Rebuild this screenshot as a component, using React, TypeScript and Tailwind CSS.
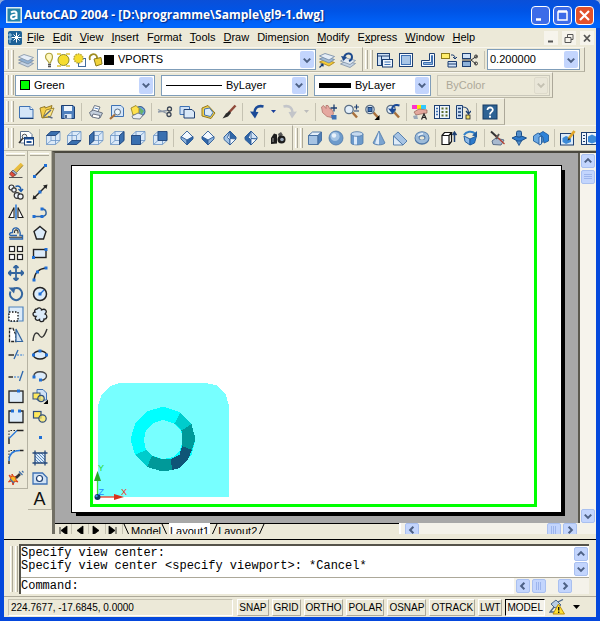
import React from 'react';

const D = '#1d3f72';
const M = '#3f72b4';
const L = '#cfe1f6';
const K = '#222222';

const CUBE_FACES = {
  top: '1.5,5.5 6,1.5 15,1.5 10.5,5.5',
  bottom: '1.5,14.5 6,10.5 15,10.5 10.5,14.5',
  left: '1.5,5.5 6,1.5 6,10.5 1.5,14.5',
  right: '10.5,5.5 15,1.5 15,10.5 10.5,14.5',
  front: '1.5,5.5 10.5,5.5 10.5,14.5 1.5,14.5',
  back: '6,1.5 15,1.5 15,10.5 6,10.5',
};

const cube = (face: keyof typeof CUBE_FACES) => (
  <g stroke="#6a93c4" strokeWidth="0.8" strokeLinejoin="round">
    <path d="M1.5 5.5L6 1.5H15V10.5L10.5 14.5H1.5Z" fill="#dbe9f8" />
    <path d="M6 1.5V10.5H15M6 10.5L1.5 14.5M1.5 5.5H10.5V14.5M10.5 5.5L15 1.5" fill="none" />
    <polygon points={CUBE_FACES[face]} fill="#3a70b0" stroke={D} />
  </g>
);

const gem = (a: string, b: string, c: string, turned?: boolean) => (
  <g stroke="#2d5c98" strokeWidth="0.9" strokeLinejoin="round">
    <path d="M8 1L14 7L8 15L2 7Z" fill={a} />
    {turned ? (
      <>
        <path d="M8 1L2 7V9.500L8 15V10L5.500 7.500Z" fill={b} />
        <path d="M8 1V8.500L14 9V7Z" fill={c} />
        <path d="M8 15L14 9L8 8.500Z" fill={a} />
      </>
    ) : (
      <>
        <path d="M2 6.500L8 10V15L2 9Z" fill={b} />
        <path d="M14 6.500L8 10V15L14 9Z" fill={c} />
      </>
    )}
  </g>
);

const magnifier = (
  <>
    <path d="M9.500 8.500L14 13.500" stroke="#a8703c" strokeWidth="2.500" />
    <circle cx="6" cy="5.500" r="4.200" fill="#e4f0fb" stroke="#5b6f86" strokeWidth="1.300" />
  </>
);

const ICONS: Record<string, React.ReactNode> = {
  layers: (
    <g stroke="#7d8fa6" strokeWidth="0.8">
      <path d="M0.500 11L6 8.500L15.500 11.500L10 15Z" fill="#c3d2e2" />
      <path d="M0.500 8L6 5.500L15.500 8.500L10 12Z" fill="#8fb0d2" />
      <path d="M0.500 5L6 2.500L15.500 5.500L10 9Z" fill="#e6eef7" />
    </g>
  ),
  layerCurrent: (
    <g strokeWidth="0.8">
      <path d="M0.500 10L6 7.500L15.500 10.500L10 14Z" fill="#f3cb36" stroke="#a8801a" />
      <path d="M0.500 7L6 4.500L15.500 7.500L10 11Z" fill="#9fb9d4" stroke="#6e87a3" />
      <path d="M0.500 4L6 1.500L15.500 4.500L10 8Z" fill="#e6eef7" stroke="#6e87a3" />
      <path d="M0.500 15.500L4 12M4 12H1.500M4 12V14.500" stroke="#10366e" strokeWidth="1.200" />
    </g>
  ),
  layerPrev: (
    <g>
      <path d="M0.500 12L6 9L15.500 11.500L10 15.500Z" fill="#c3d2e2" stroke="#7d8fa6" strokeWidth="0.8" />
      <path d="M0.500 9L6 6L15.500 8.500L10 12.500Z" fill="#e2eaf3" stroke="#7d8fa6" strokeWidth="0.8" />
      <path d="M4 6C5 0.500 12 0 12 5C12 7 10.500 8.500 9 9" fill="none" stroke="#1d4a8c" strokeWidth="2" />
      <path d="M1 4L7 5L3.500 9Z" fill="#1d4a8c" />
    </g>
  ),
  vpDialog: (
    <g stroke={D}>
      <rect x="0.500" y="1.500" width="12" height="12" fill={L} />
      <path d="M0.500 4H12.500M4.500 4V13.500" />
      <rect x="5.500" y="7.500" width="10" height="7.500" fill="#eef5fc" />
      <path d="M7.500 10H13.500M7.500 12.500H13.500" stroke={M} />
    </g>
  ),
  vpSingle: (
    <g>
      <rect x="1.500" y="1.500" width="13" height="13" fill="#f4f9fe" stroke={D} />
      <rect x="3.500" y="3.500" width="9" height="9" fill="#a9c6e6" stroke={M} />
    </g>
  ),
  vpPoly: (
    <g>
      <path d="M9.500 1.500H14.500V14.500H1.500V8.500H9.500Z" fill="#f4f9fe" stroke={D} />
      <path d="M11.500 3.500H12.500V12.500H3.500V10.500H11.500Z" fill="#8fb3da" stroke={M} />
    </g>
  ),
  vpObject: (
    <g>
      <rect x="0.500" y="1.500" width="8" height="5" fill="#ffee6b" stroke="#8b7a19" />
      <path d="M10 3C13 2.500 14 4 14 6.500M12 5L14 7L16 5" fill="none" stroke={D} />
      <path d="M7 9.500H15.500V15H7ZM7 12H15.500" fill={L} stroke={D} />
    </g>
  ),
  vpClip: (
    <g>
      <rect x="0.500" y="1.500" width="8" height="5" fill={L} stroke={D} />
      <rect x="0.500" y="9.500" width="8" height="5" fill="#8fb3da" stroke={D} />
      <path d="M0 8H9L15 4M9 8L14 12" stroke="#333" fill="none" />
      <circle cx="14" cy="4.500" r="1.500" fill="none" stroke="#333" />
      <circle cx="14" cy="11.500" r="1.500" fill="none" stroke="#333" />
    </g>
  ),
  newFile: (
    <g>
      <path d="M1.500 2.500H12L15 5.500V14H1.500Z" fill="#d5e6f8" stroke={M} />
      <path d="M12 2.500V5.500H15" fill="#fff" stroke={M} />
      <path d="M2 14.500H15.500" stroke={D} />
    </g>
  ),
  open: (
    <g>
      <path d="M1 4L6 2.500V4L13 1.500L10 13L3 14Z" fill="#f5cf4c" stroke="#8c7220" strokeWidth="0.9" />
      <path d="M4 13.500L7 6L15 4L11.500 12.500Z" fill="#ffe989" stroke="#8c7220" strokeWidth="0.8" />
      <path d="M5 12.500L12 6M9 12.500L13.500 14" stroke="#5b6b86" strokeWidth="1.500" />
    </g>
  ),
  save: (
    <g>
      <path d="M1.500 1.500H13L14.500 3V14.500H1.500Z" fill="#4f80bd" stroke={D} />
      <rect x="4" y="2" width="8" height="5" fill="#eef5fc" />
      <rect x="4.500" y="10" width="7" height="4.500" fill="#dce8f5" />
      <path d="M6 11V14" stroke={D} strokeWidth="1.500" />
    </g>
  ),
  print: (
    <g stroke="#5e6878" strokeWidth="0.9">
      <path d="M4 7L6.500 1.500L12 3L10 8Z" fill="#fff" />
      <path d="M1.500 8.500L5 6L14.500 9L12 14L3 12Z" fill="#c4cfdd" />
      <path d="M5 10L12 11.500L11 14.500L4 13Z" fill="#fff" />
      <path d="M6.500 4L10.500 5" stroke={M} />
    </g>
  ),
  preview: (
    <g>
      <path d="M2.500 1.500H12L14.500 4V12.500H2.500Z" fill="#d5e6f8" stroke={M} />
      <path d="M6 10.500L1 15" stroke="#a8703c" strokeWidth="2.200" />
      <circle cx="8.500" cy="8" r="3" fill="#eef6fd" stroke="#5b6f86" />
    </g>
  ),
  publish: (
    <g>
      <circle cx="10" cy="7.500" r="5" fill="#6da2dc" stroke={D} strokeWidth="0.8" />
      <path d="M9 3L14 7L11 11Z" fill="#66b36a" />
      <path d="M1 4L6 1.500L9 4.500V10L3 11Z" fill="#ffe14d" stroke="#8b7a19" strokeWidth="0.8" />
      <path d="M2 12L8 9L13 11L10 15L3 14.500Z" fill="#e9eef4" stroke="#5e6878" strokeWidth="0.8" />
    </g>
  ),
  cut: (
    <g fill="none" stroke="#3c4655">
      <path d="M1 5.500L10 9.500M1 8L10 6.500" stroke="#8b97a6" strokeWidth="1.300" />
      <circle cx="12.500" cy="5" r="2" strokeWidth="1.300" />
      <circle cx="12" cy="10.500" r="2" strokeWidth="1.300" />
    </g>
  ),
  copyClip: (
    <g>
      <path d="M1 2.500H10.500V10.500H1Z" fill={L} stroke={M} />
      <path d="M5 5.500H13L15.500 8V14H5Z" fill="#d9e8f8" stroke={D} />
    </g>
  ),
  paste: (
    <g>
      <path d="M2 4L8 1.500L15 9L11 14.500L2 12Z" fill="#f2d04e" stroke="#94791c" />
      <path d="M4.500 5L9.500 4L13 8.500L10.500 12.500L4.500 11Z" fill="#dcebf9" stroke={M} />
    </g>
  ),
  match: (
    <g>
      <path d="M14.500 1.500L8 8.500" stroke="#8f4a3a" strokeWidth="2.500" />
      <path d="M8.500 7L10 9L7 12.500L1.500 14.500L5 9.500Z" fill="#2b2b2b" />
    </g>
  ),
  undo: (
    <g>
      <path d="M14.500 2.500C8 1 5 4.500 5.500 10" fill="none" stroke="#1b4a97" strokeWidth="2.600" />
      <path d="M1 7.500L6 14.500L9.500 8Z" fill="#1b4a97" />
    </g>
  ),
  redo: (
    <g>
      <path d="M1.500 2.500C8 1 11 4.500 10.500 10" fill="none" stroke="#c3c5c9" strokeWidth="2.600" />
      <path d="M15 7.500L10 14.500L6.500 8Z" fill="#c3c5c9" />
    </g>
  ),
  pan: (
    <g>
      <path d="M0.500 3L2.500 1.500L5 4.500L5 1.500L7 1.500L9 5L10.500 5L12.500 9L11 13.500L6 12.500L1.500 8.500Z" fill="#e5a8a0" stroke="#a8675f" strokeWidth="0.700" />
      <path d="M10 11H15.500V15.500H11Z" fill={M} />
      <path d="M13 0.500V7.500M9.500 4H16.500" stroke={D} strokeWidth="1.300" />
    </g>
  ),
  zoomRt: (
    <g>
      {magnifier}
      <path d="M11 3H16M13.500 0.500V5.500M11 7H16" stroke={D} strokeWidth="1.200" />
    </g>
  ),
  zoomWin: (
    <g>
      {magnifier}
      <rect x="4" y="3.500" width="4" height="4" fill={M} stroke={D} />
      <path d="M15.500 11V16H10.500Z" fill="#000" />
    </g>
  ),
  zoomPrev: (
    <g>
      {magnifier}
      <path d="M14.500 1.500C10 0 7 2 7 5.500" fill="none" stroke="#1b4a97" strokeWidth="2" />
      <path d="M3 4.500L7.500 10L11 5Z" fill="#1b4a97" />
    </g>
  ),
  props: (
    <g>
      <rect x="0" y="1" width="5" height="4" fill="#ff32c8" />
      <rect x="5" y="1" width="4" height="4" fill="#ffe600" />
      <rect x="9" y="1" width="5" height="4" fill="#30c8ff" />
      <path d="M2 8L7 5L15 6V9L9 10L4 11Z" fill="#e3a79c" stroke="#8f5f55" strokeWidth="0.700" />
      <path d="M1 12L5 11L6 15H2Z" fill="#9aa8b8" />
      <path d="M9.500 15.500L12 10L14.500 15.500M10.500 13.500H13.500" fill="none" stroke={K} strokeWidth="1.200" />
    </g>
  ),
  designCenter: (
    <g>
      <rect x="0.500" y="1.500" width="15" height="13" fill="#eef5fc" stroke={D} />
      <path d="M5.500 1.500V14.500" stroke={D} />
      <path d="M2 4.500H4M2 7.500H4M2 10.500H4" stroke={M} strokeWidth="1.500" />
      <path d="M7.500 4.500H9.500M11.500 4.500H13.500M7.500 8H9.500M11.500 8H13.500M7.500 11.500H9.500M11.500 11.500H13.500" stroke="#5b6c2d" strokeWidth="2" />
    </g>
  ),
  toolPalette: (
    <g>
      <path d="M1.500 1.500H7.500V14.500H1.500Z" fill={L} stroke={D} />
      <path d="M3 4.500H6M3 8H6M3 11.500H6" stroke={D} strokeWidth="1.500" />
      <path d="M8 3C12 3 13.500 5 13.500 9M11 7L13.500 10L16 7" fill="none" stroke={D} strokeWidth="1.200" />
      <rect x="11" y="11" width="4" height="4" fill="#f0dc60" stroke={K} strokeWidth="0.800" />
    </g>
  ),
  help: (
    <g>
      <rect x="1" y="1" width="14" height="14" fill="#2d6294" stroke="#163a63" />
      <path d="M5.500 6C5.500 2.500 11 2.800 10.800 6C10.700 8 8 7.800 8 10.500" fill="none" stroke="#fff" strokeWidth="1.800" />
      <rect x="7" y="11.700" width="2" height="2" fill="#fff" />
    </g>
  ),
  namedViews: (
    <g>
      <path d="M2.500 1.500H11L14 4.500V13H2.500Z" fill="#fff" stroke="#60748e" />
      <path d="M1 13L5 8" stroke="#333" strokeWidth="1.500" />
      <circle cx="6.500" cy="6.500" r="2.300" fill="#e6f0fa" stroke="#555" />
      <rect x="6.500" y="7.500" width="9" height="7.500" fill="#fff" stroke={D} />
      <path d="M6.500 8.500H15.500M8.500 12H13.500" stroke="#1c4e95" strokeWidth="1.800" />
    </g>
  ),
  viewTop: cube('top'),
  viewBottom: cube('bottom'),
  viewLeft: cube('left'),
  viewRight: cube('right'),
  viewFront: cube('front'),
  viewBack: cube('back'),
  isoSW: gem('#f2f8fe', '#8fb3da', '#2f66a8'),
  isoSE: gem('#f2f8fe', '#2f66a8', '#8fb3da'),
  isoNE: gem('#f2f8fe', '#a6c5e6', '#2f66a8', true),
  isoNW: gem('#f2f8fe', '#2f66a8', '#d2e3f5', true),
  camera: (
    <g fill="#1c1c1c">
      <path d="M1 14V8L4 3.500L7 4.500V13.500Z" />
      <path d="M8 4L11 2L13 5L9 7Z" fill="#555" />
      <circle cx="11.500" cy="9.500" r="4" />
      <circle cx="12" cy="9.500" r="1.800" fill="#9aa8b8" />
      <path d="M3 8V12" stroke="#9a9a9a" />
    </g>
  ),
  box: (
    <g stroke="#426c9e" strokeWidth="0.900" strokeLinejoin="round">
      <path d="M1.500 5.500L5.500 2H14.500L11 5.500Z" fill="#e4effa" />
      <path d="M1.500 5.500H11V14.500H1.500Z" fill="#a6c3e3" />
      <path d="M11 5.500L14.500 2V10.500L11 14.500Z" fill="#4f7fb8" />
    </g>
  ),
  sphere: (
    <g>
      <circle cx="8" cy="8" r="7" fill="#6c9acb" stroke="#4c77a8" strokeWidth="0.800" />
      <circle cx="7" cy="6.500" r="4.600" fill="#a5c4e4" />
      <circle cx="6" cy="5.500" r="2.200" fill="#e9f2fb" />
    </g>
  ),
  cylinder: (
    <g stroke="#4c77a8" strokeWidth="0.800">
      <path d="M2 4V13C2 15.500 14 15.500 14 13V4Z" fill="#6c9acb" />
      <path d="M5 5V14.500H8V5Z" fill="#dceafa" stroke="none" />
      <ellipse cx="8" cy="4" rx="6" ry="2.300" fill="#c6daef" />
    </g>
  ),
  cone: (
    <g>
      <path d="M8 1L14 13C12 15.500 4 15.500 2 13Z" fill="#7ba4d0" stroke="#4c77a8" strokeWidth="0.800" />
      <path d="M8 2L4 13.500L8 14.500Z" fill="#dfebf8" />
    </g>
  ),
  wedge: (
    <g stroke="#4c77a8" strokeWidth="0.900" strokeLinejoin="round">
      <path d="M1.500 6L6 2L15 11L11 15Z" fill="#a6c3e3" />
      <path d="M1.500 6L11 15H1.500Z" fill="#dfebf8" />
    </g>
  ),
  torus: (
    <g>
      <ellipse cx="8" cy="8" rx="5" ry="4.200" fill="none" stroke="#4f78a8" strokeWidth="5" />
      <ellipse cx="8" cy="7.700" rx="5" ry="4" fill="none" stroke="#9dbbd9" strokeWidth="3.200" />
      <path d="M4 5.500Q6 3.500 9 3.700" fill="none" stroke="#e9f2fb" strokeWidth="1.500" />
    </g>
  ),
  extrude: (
    <g fill="none" stroke="#161616" strokeWidth="1.200">
      <path d="M1 5.500H8V14.500H1ZM1 5.500L3.500 2.500H10.500L8 5.500M8 14.500L10.500 11.500V2.500" fill="#fff" />
      <path d="M13.500 12V3M11.500 5L13.500 2L15.500 5" stroke={D} strokeWidth="1.500" />
    </g>
  ),
  revolve: (
    <g>
      <path d="M2 6L8 9V15L3 11.500Z" fill="#8db9e8" stroke="#215d9f" />
      <path d="M8 9L14.500 6L12.500 13L8 15Z" fill="#2d7bcc" stroke="#215d9f" />
      <path d="M2 5C4 1.500 10 0.500 13 3.500" fill="none" stroke="#3280c8" strokeWidth="2" />
      <path d="M15 1V7L10 5.500Z" fill="#215d9f" />
    </g>
  ),
  slice: (
    <g>
      <path d="M2 11L6 8L14 10L11 15L3 14.500Z" fill="#a8b9cf" stroke="#586c88" />
      <path d="M1 1.500L7 7" stroke="#333" strokeWidth="2" />
      <path d="M6 6L14.500 14" stroke="#b23b2c" strokeWidth="1.200" />
      <path d="M9 4L6 9" stroke="#555" strokeWidth="1.800" />
    </g>
  ),
  section: (
    <g>
      <path d="M1 8L8 5L15.500 8L8 12Z" fill="#2d7bcc" stroke="#174c89" />
      <rect x="5.500" y="1" width="5" height="6" rx="1.500" fill="#5590ca" stroke="#174c89" />
      <path d="M5.500 11L8 15.500L10.500 11Z" fill="#5590ca" stroke="#174c89" strokeWidth="0.800" />
    </g>
  ),
  interfere: (
    <g stroke="#215d9f" strokeWidth="0.900">
      <path d="M0.500 6L5 3L10 5V12L5 13.500L0.500 11Z" fill="#6ba8e4" />
      <path d="M6 4L10 1.500L15.500 5V11L11 13L10 7Z" fill="#2d82d8" />
      <path d="M6 7V15L8.500 14V6Z" fill="#cfe5fa" />
    </g>
  ),
  soldraw: (
    <g>
      <rect x="0.500" y="3.500" width="13" height="11.500" fill="#dcebf9" stroke={D} />
      <path d="M2.500 8L6 6L11 8V12L6 14L2.500 12Z" fill="#3b8ad8" />
      <path d="M14.500 1L8.500 9" stroke="#e0a52a" strokeWidth="2.800" />
      <path d="M9 7.500L7.500 10.500L10 9.500Z" fill="#222" />
    </g>
  ),
  solview: (
    <g>
      <rect x="0.500" y="2.500" width="15" height="12" fill="#eef5fc" stroke={D} />
      <path d="M5.500 2.500V14.500M2 5.500H4M2 8.500H4M2 11.500H4" stroke={D} />
      <path d="M7 6.500L11 4.500L15 6.500V12L11 13.500L7 12Z" fill="#3b8ad8" />
    </g>
  ),
  erase: (
    <g>
      <path d="M1 14.500H14.500" stroke="#555" />
      <path d="M14 1L7 8" stroke="#e9bd3d" strokeWidth="3.600" />
      <path d="M15 2.500L8.500 9.500" stroke="#7a6420" strokeWidth="0.800" />
      <path d="M5 7L9 10.500L7.500 12L3.500 8.500Z" fill="#9fb9d4" stroke="#445" strokeWidth="0.700" />
      <path d="M3.500 8.500L7.500 12L4.500 14L1.500 11Z" fill="#e3503f" stroke="#6b2a22" strokeWidth="0.700" />
    </g>
  ),
  copy: (
    <g fill="#edf3f9" stroke="#333" strokeWidth="1.200">
      <circle cx="3.500" cy="3.500" r="2.500" />
      <circle cx="6" cy="6" r="2.200" />
      <circle cx="9" cy="11.500" r="2.800" />
      <circle cx="12.500" cy="12.500" r="2.600" />
      <path d="M7.500 2.500C11 1 13 3 13 6.500M10.500 5L13 7.500L15 5" fill="none" stroke="#1c5cae" strokeWidth="1.400" />
    </g>
  ),
  mirror: (
    <g>
      <path d="M8 0.500V15.500" stroke="#2676d8" strokeWidth="1.500" />
      <path d="M6 3.500V13.500H1Z" fill="#fff" stroke="#222" strokeWidth="1.100" />
      <path d="M10 3.500V13.500H15Z" fill="#fff" stroke="#222" strokeWidth="1.100" />
    </g>
  ),
  offset: (
    <g fill="none">
      <path d="M1.500 14H14.500V10.500H12C13.500 2 4 0 4.500 7.500C1 7.500 0.500 10.500 3.500 10.500H9" stroke="#2c66ae" strokeWidth="1.400" />
      <path d="M1 12.300H14M6.500 8C6 3.500 10.500 4 10 8.500" stroke="#333" strokeWidth="1.100" />
    </g>
  ),
  array: (
    <g fill="#fff" stroke="#222" strokeWidth="1.200">
      <rect x="1.500" y="1.500" width="5" height="5" />
      <rect x="9.500" y="1.500" width="5" height="5" />
      <rect x="1.500" y="9.500" width="5" height="5" />
      <rect x="9.500" y="9.500" width="5" height="5" />
    </g>
  ),
  move: (
    <path d="M8 0.500V15.500M0.500 8H15.500M5.500 3L8 0.500L10.500 3M5.500 13L8 15.500L10.500 13M3 5.500L0.500 8L3 10.500M13 5.500L15.500 8L13 10.500" fill="none" stroke="#33659f" strokeWidth="1.800" />
  ),
  rotate: (
    <g>
      <path d="M6 2.500C13 0 16.500 8 12 12.500C7.500 16.500 0 12 2.500 5.500" fill="none" stroke="#33659f" strokeWidth="2" />
      <path d="M0.500 1.500H7.500L6 7.500Z" fill="#33659f" />
    </g>
  ),
  scale: (
    <g>
      <path d="M1 1H15V15H1Z" fill="#dcebf9" stroke="#4f83bd" strokeWidth="1.200" />
      <rect x="1" y="6" width="9" height="9" fill="#fff" stroke="#111" strokeWidth="1.300" strokeDasharray="1.500 1.500" />
    </g>
  ),
  stretch: (
    <g>
      <path d="M1.500 14.500V1.500H5L8 8V14.500Z" fill="#fff" stroke="#222" strokeDasharray="3 1" strokeWidth="1.300" />
      <path d="M8 2L14.500 14.500H8Z" fill="#d2e3f5" stroke="#33659f" strokeWidth="1.200" />
    </g>
  ),
  trim: (
    <g>
      <path d="M0.500 8H6" stroke="#222" strokeWidth="1.400" />
      <path d="M9 8H16" stroke="#2676d8" strokeWidth="1.200" strokeDasharray="2 1.200" />
      <path d="M6 12L10 3" stroke="#2c66ae" strokeWidth="1.300" />
    </g>
  ),
  extend: (
    <g>
      <path d="M0.500 9H5" stroke="#222" strokeWidth="1.400" />
      <path d="M6 9H12" stroke="#2676d8" strokeWidth="1.200" strokeDasharray="2 1.200" />
      <path d="M11.500 13L15 3" stroke="#2c66ae" strokeWidth="1.300" />
    </g>
  ),
  breakPt: (
    <g>
      <rect x="1" y="3" width="14" height="11.500" fill="#dcebf9" stroke="#222" strokeWidth="1.300" />
      <rect x="9" y="1.500" width="3" height="3" fill="#1f6fd6" />
    </g>
  ),
  breakGap: (
    <g>
      <path d="M4 3H1V14.500H15V3H12" fill="#dcebf9" stroke="#222" strokeWidth="1.300" />
      <rect x="3" y="1.500" width="3" height="3" fill="#1f6fd6" />
      <rect x="10" y="1.500" width="3" height="3" fill="#1f6fd6" />
    </g>
  ),
  chamfer: (
    <g fill="none">
      <path d="M1 15V9M9 1.500H15.500" stroke="#222" strokeWidth="1.400" />
      <path d="M1 9V1.500H9" stroke="#222" strokeDasharray="1.500 1.500" />
      <path d="M1 9.500L9 1.500" stroke="#2676d8" strokeWidth="1.300" />
    </g>
  ),
  fillet: (
    <g fill="none">
      <path d="M1 15V12M12 1.500H15.500" stroke="#222" strokeWidth="1.400" />
      <path d="M1 9V1.500H9" stroke="#222" strokeDasharray="1.500 1.500" />
      <path d="M1 12C1 5 5 1.500 12 1.500" stroke="#2676d8" strokeWidth="1.500" />
    </g>
  ),
  explode: (
    <g>
      <path d="M1 5L4 7L4 4L6 7L9 6L7.500 9L10 12L6.500 11L5 15L4 11L0.500 12L3 9Z" fill="#f5b921" stroke="#d93a1b" />
      <path d="M8 8L12 4" stroke="#333" strokeWidth="2.500" />
      <path d="M11 1.500L14.500 5M14 1L15.500 2.500M2 9L6 13" stroke="#3f6ea8" strokeWidth="1.200" />
    </g>
  ),
  line: (
    <g>
      <path d="M2.500 13.500L13.500 2.500" stroke="#222" strokeWidth="1.400" />
      <rect x="1" y="12" width="3" height="3" fill="#1f6fd6" />
      <rect x="12" y="1" width="3" height="3" fill="#1f6fd6" />
    </g>
  ),
  xline: (
    <g>
      <path d="M2.500 13.500L13.500 2.500" fill="none" stroke="#222" strokeWidth="1.400" />
      <path d="M0.500 15.500L1.500 11L5 14.500ZM15.500 0.500L14.500 5L11 1.500Z" fill="#222" />
      <rect x="6.500" y="6.500" width="3" height="3" fill="#1f6fd6" />
    </g>
  ),
  pline: (
    <g>
      <path d="M2 12.500H10C16 12.500 15 5 10 5" fill="none" stroke="#33659f" strokeWidth="1.500" />
      <rect x="0.500" y="11" width="3" height="3" fill="#1f6fd6" />
      <rect x="8.500" y="11" width="3" height="3" fill="#1f6fd6" />
      <rect x="8.500" y="3.500" width="3" height="3" fill="#1f6fd6" />
    </g>
  ),
  polygon: <path d="M8 1.500L14 6.500L11.500 14H4.500L2 6.500Z" fill="#dcebf9" stroke="#222" strokeWidth="1.400" />,
  rectangle: (
    <g>
      <rect x="1.500" y="4.500" width="12.500" height="8" fill="#dcebf9" stroke="#222" strokeWidth="1.400" />
      <rect x="0" y="11" width="3" height="3" fill="#1f6fd6" />
      <rect x="12.500" y="3" width="3" height="3" fill="#1f6fd6" />
    </g>
  ),
  arc: (
    <g>
      <path d="M2 14C2.500 7 7 2.500 14 2" fill="none" stroke="#222" strokeWidth="1.400" />
      <rect x="0.500" y="12.500" width="3" height="3" fill="#1f6fd6" />
      <rect x="4" y="4.500" width="3" height="3" fill="#1f6fd6" />
      <rect x="12.500" y="0.500" width="3" height="3" fill="#1f6fd6" />
    </g>
  ),
  circle: (
    <g>
      <circle cx="8" cy="8" r="6.500" fill="#dcebf9" stroke="#222" strokeWidth="1.500" />
      <path d="M8 8L12 4" stroke="#1f6fd6" strokeWidth="1.300" />
      <rect x="6.500" y="6.500" width="3" height="3" fill="#1f6fd6" />
    </g>
  ),
  cloud: (
    <path d="M5 2C7 0 9.500 1 9.500 3C13 1 16 4 13 7C16 8.500 15 12.500 12 12C12 15.500 7.500 15.500 7.500 12.500C5 14.500 2 12 4 9.500C0.500 9.500 0 5.500 3 5C2 4 3 2 5 2Z" fill="#dcebf9" stroke="#222" strokeWidth="1.300" />
  ),
  spline: <path d="M1 14C2 4 5.500 5 7.500 8.500C10 12.500 12.500 9 15 2" fill="none" stroke="#333" strokeWidth="1.400" />,
  ellipse: (
    <g>
      <ellipse cx="8" cy="8" rx="6.500" ry="4" fill="#dcebf9" stroke="#222" strokeWidth="1.400" />
      <rect x="0" y="6.500" width="3" height="3" fill="#1f6fd6" />
      <rect x="13" y="6.500" width="3" height="3" fill="#1f6fd6" />
      <rect x="6.500" y="2.500" width="3" height="3" fill="#1f6fd6" />
    </g>
  ),
  ellipseArc: (
    <g>
      <path d="M2 8.500C1 2 15 2.500 14.500 8C14.500 11 11 12.500 8.500 12" fill="#dcebf9" stroke="#444" strokeWidth="1.400" />
      <rect x="0.500" y="7.500" width="3" height="3" fill="#1f6fd6" />
      <rect x="7" y="10.500" width="3" height="3" fill="#1f6fd6" />
    </g>
  ),
  insert: (
    <g>
      <path d="M5 1.500H11L14.500 5V12H5Z" fill="#cfe1f6" stroke={M} />
      <rect x="1" y="5" width="7" height="6" fill="#ffe95c" stroke="#33507a" />
      <circle cx="9" cy="10.500" r="3.200" fill="#ffe95c" fillOpacity="0.700" stroke="#33507a" strokeWidth="1.200" />
      <path d="M16 11.500V16H11.500Z" fill="#000" />
    </g>
  ),
  block: (
    <g>
      <rect x="1.500" y="2.500" width="7.500" height="6.500" fill="#ffe95c" stroke="#33507a" strokeWidth="1.200" />
      <circle cx="10.500" cy="9.500" r="3.700" fill="#ffe95c" fillOpacity="0.700" stroke="#33507a" strokeWidth="1.200" />
    </g>
  ),
  point: <rect x="7" y="7" width="3" height="3" fill="#1f6fd6" />,
  hatch: (
    <g>
      <rect x="3" y="3" width="10" height="10" fill="#dcebf9" />
      <path d="M3 9L7 13M3 6L10 13M3 3L13 13M6 3L13 10M9 3L13 7" stroke="#5e8dc2" />
      <path d="M3 0.500V15.500M13 0.500V15.500M0.500 3H15.500M0.500 13H15.500" stroke="#24487a" strokeWidth="1.300" />
    </g>
  ),
  region: (
    <g>
      <path d="M1 3H10.500L15 7.500V14H1Z" fill="#d2e3f5" stroke={M} strokeWidth="1.300" />
      <circle cx="7.500" cy="8.500" r="3" fill="#fff" stroke={D} strokeWidth="1.200" />
    </g>
  ),
};

const Icon: React.FC<{name: string; className?: string}> = ({name, className = 'size-4'}) => (
  <svg viewBox="0 0 16 16" className={`${className} shrink-0`} aria-hidden="true">
    {ICONS[name]}
  </svg>
);

// '|' is a divider, 'v' a small flyout arrow, everything else an icon name
const STANDARD =
  'newFile open save | print preview publish | cut copyClip paste match | undo v redo v | pan zoomRt zoomWin zoomPrev | props designCenter toolPalette | help';
const VIEWS =
  'namedViews | viewTop viewBottom viewLeft viewRight viewFront viewBack | isoSW isoSE isoNE isoNW | camera';
const SOLIDS =
  'box sphere cylinder cone wedge torus | extrude revolve | slice section interfere | soldraw solview';
const VIEWPORTS = 'vpDialog vpSingle vpPoly vpObject vpClip |';
const MODIFY =
  'erase copy mirror offset array move rotate scale stretch trim extend breakPt breakGap chamfer fillet explode';
const DRAW =
  'line xline pline polygon rectangle arc circle cloud spline ellipse ellipseArc insert block point hatch region';

const Grip = () => (
  <span className="flex w-[11px] shrink-0 gap-0.5 self-stretch py-0.5 pl-0.5">
    <span className="w-[3px] border-r border-l border-r-[#aca899] border-l-white" />
    <span className="w-[3px] border-r border-l border-r-[#aca899] border-l-white" />
  </span>
);

const Tools: React.FC<{items: string}> = ({items}) => (
  <div className="flex flex-1 items-center">
    {items.split(' ').map((item, i) => {
      if (item === '|') {
        return (
          <span key={i} className="flex h-[18px] w-1.5 shrink-0 justify-center">
            <span className="w-px bg-[#c5c2b2]" />
          </span>
        );
      }
      if (item === 'v') {
        return (
          <button key={i} type="button" aria-label="More" className="flex w-3 shrink-0 justify-center">
            <svg viewBox="0 0 5 3" className="w-[5px]">
              <path d="M0 0H5L2.500 3Z" fill={items.split(' ')[i - 1] === 'undo' ? '#1a3f9a' : '#bcbcbc'} />
            </svg>
          </button>
        );
      }
      return (
        <button key={i} type="button" aria-label={item} className="flex flex-1 justify-center">
          <Icon name={item} />
        </button>
      );
    })}
  </div>
);

const Bar: React.FC<{className: string; children: React.ReactNode}> = ({className, children}) => (
  <div
    className={`flex items-center border-t border-r border-b border-t-[#f8f6ee] border-r-[#aca899] border-b-[#b9b6a5] ${className}`}>
    <Grip />
    {children}
  </div>
);

const Palette: React.FC<{items: string; text?: boolean; className: string}> = ({items, text, className}) => (
  <div className={`flex w-6 shrink-0 flex-col border-r border-b border-r-[#b5b2a2] border-b-[#b5b2a2] px-0.5 ${className}`}>
    <span className="mt-0.5 mb-[5px] h-[3px] shrink-0 border-t border-b border-t-white border-b-[#aca899]" />
    {items.split(' ').map(item => (
      <button key={item} type="button" aria-label={item} className="flex flex-1 items-center justify-center">
        <Icon name={item} />
      </button>
    ))}
    {text && (
      <button type="button" className="flex flex-1 items-center justify-center text-lg leading-5 text-[#111]">
        A
      </button>
    )}
  </div>
);

type ArrowDir = 'up' | 'down' | 'left' | 'right';
const CHEVRONS: Record<ArrowDir, string> = {
  up: 'M3 8L6.500 4.500L10 8',
  down: 'M3 5L6.500 8.500L10 5',
  left: 'M8 3L4.500 6.500L8 10',
  right: 'M5 3L8.500 6.500L5 10',
};

const ScrollButton: React.FC<{dir: ArrowDir}> = ({dir}) => (
  <button
    type="button"
    aria-label={`Scroll ${dir}`}
    className="flex size-3.5 shrink-0 items-center justify-center rounded-xs border border-[#a9c0f0] bg-[#c3d5fd]">
    <svg viewBox="0 0 13 13" className="size-3 shrink-0">
      <path d={CHEVRONS[dir]} fill="none" stroke="#4d6185" strokeWidth="2.200" />
    </svg>
  </button>
);

const Thumb: React.FC<{upright?: boolean}> = ({upright}) => (
  <span className="flex size-3.5 shrink-0 items-center justify-center rounded-xs border border-[#a9c0f0] bg-[#c3d5fd]">
    <svg viewBox="0 0 8 8" className="size-2">
      <path d={upright ? 'M0 1.500H8M0 3.500H8M0 5.500H8' : 'M1.500 0V8M3.500 0V8M5.500 0V8'} stroke="#9db5ec" />
    </svg>
  </span>
);

type ComboProps = {
  label: string;
  value: string;
  className: string;
  indent?: string;
  disabled?: boolean;
  children?: React.ReactNode;
};

const Combo: React.FC<ComboProps> = ({label, value, className, indent = 'pl-1', disabled, children}) => (
  <div
    className={`relative flex h-[21px] items-center border ${
      disabled ? 'border-[#c9c7ba] bg-[#ece9d8]' : 'border-[#7f9db9] bg-white'
    } ${className}`}>
    {children}
    <select
      aria-label={label}
      disabled={disabled}
      className={`h-full min-w-0 flex-1 appearance-none bg-transparent pr-4 text-[11px] ${indent} ${
        disabled ? 'text-[#aca899]' : 'text-black'
      }`}>
      <option>{value}</option>
    </select>
    <span
      className={`pointer-events-none absolute top-px right-px flex h-[17px] w-3.5 items-center justify-center rounded-xs ${
        disabled ? 'border border-[#dddacb] bg-[#e9e6d8]' : 'bg-[#c3d5fd]'
      }`}>
      <svg viewBox="0 0 13 13" className="size-3">
        <path d={CHEVRONS.down} fill="none" stroke={disabled ? '#c4c1b2' : '#4d6185'} strokeWidth="2.200" />
      </svg>
    </span>
  </div>
);

const MENUS = [
  ['', 'F', 'ile'],
  ['', 'E', 'dit'],
  ['', 'V', 'iew'],
  ['', 'I', 'nsert'],
  ['F', 'o', 'rmat'],
  ['', 'T', 'ools'],
  ['', 'D', 'raw'],
  ['Dime', 'n', 'sion'],
  ['', 'M', 'odify'],
  ['E', 'x', 'press'],
  ['', 'W', 'indow'],
  ['', 'H', 'elp'],
];

const TitleBar = () => (
  <header className="flex h-7 shrink-0 items-center gap-0.5 rounded-t-md bg-linear-to-b from-[#0a4fd8] from-0% via-[#0054e6] via-40% to-[#0064fb] to-90% pt-0.5 pr-1.5 pl-1.5">
    <svg viewBox="0 0 16 16" className="size-4 shrink-0">
      <rect width="16" height="16" fill="#dcecf4" />
      <rect x="1.500" y="1.500" width="13" height="13" fill="#2583a8" />
      <path d="M5 5.500C7 4 10.500 4 10.500 6.500V12M10.500 8C7 7.500 5 8.500 5 10C5 12.500 9 12.500 10.500 10" fill="none" stroke="#fff" strokeWidth="2" />
    </svg>
    <h1 className="flex-1 truncate font-['Open_Sans','Noto_Sans',sans-serif] text-[12px] font-bold text-white [text-shadow:1px_1px_1px_#0a2a80]">
      AutoCAD 2004 - [D:\programme\Sample\gl9-1.dwg]
    </h1>
    <div className="flex gap-[3px]">
      <button type="button" aria-label="Minimize" className="size-[19px] rounded-sm border border-white bg-[#3c6be8]">
        <svg viewBox="0 0 17 17"><path d="M4 12.500H9" stroke="#fff" strokeWidth="2.500" /></svg>
      </button>
      <button type="button" aria-label="Maximize" className="size-[19px] rounded-sm border border-white bg-[#3c6be8]">
        <svg viewBox="0 0 17 17"><path d="M4 5H13V13H4Z M4 4H13" fill="none" stroke="#fff" strokeWidth="1.500" /></svg>
      </button>
      <button type="button" aria-label="Close" className="size-[19px] rounded-sm border border-white bg-[#e2512b]">
        <svg viewBox="0 0 17 17"><path d="M4 4L13 13M13 4L4 13" stroke="#fff" strokeWidth="2.200" /></svg>
      </button>
    </div>
  </header>
);

const MenuBar = () => (
  <nav className="flex h-[19px] shrink-0 items-center pr-0.5 pl-1">
    <svg viewBox="0 0 14 14" className="mr-[5px] size-3.5 shrink-0">
      <rect width="14" height="14" rx="2" fill="#1e6196" />
      <path d="M2 2V12M0 4H4M0 8H4" stroke="#9fd0ee" />
      <path d="M8.500 1.500V11.500M3.500 6.500H13.500M5.500 3.500L11.500 9.500M11.500 3.500L5.500 9.500" stroke="#fff" />
    </svg>
    <div className="flex flex-1 gap-2">
      {MENUS.map(([before, key, after]) => (
        <button key={before + key + after} type="button">
          {before}
          <u className="underline-offset-1">{key}</u>
          {after}
        </button>
      ))}
    </div>
    <div className="flex gap-1">
      {['M4 10.500H9', 'M3 6.500H9V11.500H3ZM5.500 6V3.500H11V8.500H9', 'M4 4L10 10.500M10 4L4 10.500'].map((d, i) => (
        <button key={d} type="button" aria-label={['Minimize drawing', 'Restore drawing', 'Close drawing'][i]} className="size-3.5 bg-[#f6f4ec]">
          <svg viewBox="0 0 14 14">
            <path d={d} fill="none" stroke="#555" strokeWidth={i === 1 ? 1 : 1.8} />
          </svg>
        </button>
      ))}
    </div>
  </nav>
);

const LayerStates = () => (
  <svg viewBox="0 0 72 16" className="ml-1.5 h-4 w-[72px] shrink-0">
    <path d="M5 11C5 9 1.500 8 1.500 5C1.500 0 8.500 0 8.500 5C8.500 8 6.500 9 6.500 11Z" fill="#fff8c0" stroke="#b0a440" strokeWidth="1.200" />
    <path d="M4 12.500H7M4 14.500H7" stroke="#555" strokeWidth="1.500" />
    <path d="M13 2H17M22 2H26M13 14H17M22 14H26" stroke="#e0c53a" strokeWidth="1.500" />
    <circle cx="19.500" cy="8" r="5.500" fill="#f6dd2f" stroke="#8b8b34" />
    <rect x="34.500" y="6.500" width="7" height="8" fill="#fff" stroke="#426c9e" />
    <circle cx="34.500" cy="6.500" r="4.500" fill="#f6dd2f" stroke="#b8a63c" strokeDasharray="1.500 1" strokeWidth="1.500" />
    <path d="M46 8C44 2 52 0 53 5V8" fill="none" stroke="#a08d22" strokeWidth="1.800" />
    <path d="M50 7L57 5.500L58 12L52 14Z" fill="#f0d23c" stroke="#8b7a19" />
    <rect x="60" y="3" width="10" height="10" fill="#000" />
  </svg>
);

// Shaded faces of the torus seen from above, in drawing units of the viewport
const FACES = [
  {fill: '#00cccc', points: '87.5,32.500 98.500,44 88.500,50.500 81.500,43.500'},
  {fill: '#009999', points: '98.500,44 102.500,59 99,70 89,66 89,57 88.500,50.500'},
  {fill: '#0f5577', points: '99,70 95,79 86.500,88 79,90 78,79 86.500,75 89,66'},
  {fill: '#009999', points: '79,90 70,91.500 54,87 59,76 68,79 78,79'},
  {fill: '#00cccc', points: '54,87 42,75 53,70 59,76'},
];

const Drawing = () => (
  <svg viewBox="0 0 140 124" className="h-[124px] w-[140px]" shapeRendering="crispEdges">
    <path d="M5 117V26L9 14L17 6L26 3H112L123 5L133 15L136 26V117Z" fill="#77ffff" />
    <path
      d="M70 26.500L87.500 32.500L98.500 44L102.500 59L98.500 75L86.500 88L70 91.500L54 87L42 75L37.500 59L42 44L54 31.500ZM70 40L60 43L53 50L51 60L53 70L60 76L70 79L80 77L87 70L90 60L88 50L80 43Z"
      fill="#00ffff"
      fillRule="evenodd"
    />
    {FACES.map(({fill, points}) => (
      <polygon key={points} points={points} fill={fill} />
    ))}
    <g shapeRendering="auto">
      <path d="M4.500 117V99" stroke="#3be03b" strokeWidth="1.300" />
      <path d="M4.500 91L8 101H1Z" fill="#27a827" />
      <path d="M5 117H24" stroke="#ee3a24" strokeWidth="1.300" />
      <path d="M21 114L31 117L21 120Z" fill="#d8301c" />
      <circle cx="4.500" cy="117" r="3" fill="#0d3b66" />
      <circle cx="3.500" cy="116" r="1.200" fill="#3f92e0" />
    </g>
    <g fontSize="9" fontFamily="'Liberation Sans', sans-serif">
      <text x="5" y="91" fill="#2fd82f">Y</text>
      <text x="28" y="115" fill="#ee3a24">X</text>
      <text x="5.500" y="115" fill="#2389ff">Z</text>
    </g>
  </svg>
);

const Slant: React.FC<{d: string; className?: string}> = ({d, className = 'bg-[#ece9d8]'}) => (
  <svg viewBox="0 0 8 11" className={`h-[11px] w-2 shrink-0 ${className}`}>
    <path d={d} fill="none" stroke="#000" />
  </svg>
);

const LayoutTabs = () => (
  <div className="flex h-[11px] shrink-0 overflow-hidden text-[11px] leading-[15px]">
    <div className="flex flex-1 border-t border-black">
      {['M9 4V11M16 3V12L10 7.500Z', 'M15 3V12L9 7.500Z', 'M8 3V12L14 7.500Z', 'M14 4V11M7 3V12L13 7.500Z'].map((d, i) => (
        <button key={d} type="button" aria-label={['First', 'Previous', 'Next', 'Last'][i]} className="h-[11px] w-[17px] overflow-hidden border-r border-[#c5c2b2]">
          <svg viewBox="4 1 17 11" className="h-[11px] w-[17px]">
            <path d={d} fill="#000" stroke="#000" strokeWidth="0.800" />
          </svg>
        </button>
      ))}
      <Slant d="M1 0L6 11" />
      <button type="button">Model</button>
      <Slant d="M1 0L6 11" />
      <button type="button" className="-mt-px bg-white px-px pt-px">Layout1</button>
      <Slant d="M7 0L2 11" />
      <button type="button">Layout2</button>
      <Slant d="M7 0L2 11" />
    </div>
    <div className="flex w-[197px] items-start border-l-2 border-white bg-[#f4f2ea] pr-[19px] pl-1">
      <ScrollButton dir="left" />
      <span className="flex-1" />
      <Thumb />
      <span className="w-0.5" />
      <ScrollButton dir="right" />
    </div>
  </div>
);

const ModelArea = () => (
  <main className="flex min-w-0 flex-1 flex-col border-t-2 border-l-[3px] border-t-[#4a483f] border-l-[#716f64]">
    <div className="flex flex-1">
      <div className="flex flex-1 bg-[#a8a8a8] pt-3 pr-4 pb-2.5 pl-4">
        <div className="flex flex-1 border border-black bg-white pt-[5px] pr-6 pb-[5px] pl-[18px] shadow-[4px_4px_0_-1px_#000]">
          <div className="flex flex-1 items-end border-[3px] border-[#00ff00]">
            <Drawing />
          </div>
        </div>
      </div>
      <div className="flex w-[18px] flex-col items-center gap-0.5 border-l-2 border-[#5b594f] bg-[#f6f3ec] pt-px">
        <ScrollButton dir="up" />
        <Thumb upright />
        <span className="flex-1" />
        <ScrollButton dir="down" />
      </div>
    </div>
    <LayoutTabs />
  </main>
);

const CommandWindow = () => (
  <section className="mt-[5px] flex shrink-0 border-t border-black bg-[#ece9d8] pt-1 pr-[7px] pb-0.5 pl-1">
    <Grip />
    <div className="flex-1 border-t-2 border-l-2 border-[#55534a] bg-white font-['Liberation_Mono',monospace] text-[12px]">
      <div className="flex border-b border-[#aca899]">
        <div className="flex-1 pt-px pb-1 leading-[13px]">
          <p>Specify view center:</p>
          <p>Specify view center &lt;specify viewport&gt;: *Cancel*</p>
        </div>
        <div className="flex flex-col gap-px pt-px pr-px">
          <ScrollButton dir="up" />
          <ScrollButton dir="down" />
        </div>
      </div>
      <div className="flex h-4 items-center">
        <label htmlFor="command">Command:</label>
        <input id="command" className="h-4 min-w-0 flex-1 pl-1 outline-none" />
        <div className="flex h-full w-[75px] items-center gap-0.5 bg-[#f4f2ea] pl-0.5">
          <ScrollButton dir="left" />
          <Thumb />
          <span className="w-2" />
          <ScrollButton dir="right" />
        </div>
      </div>
    </div>
  </section>
);

const MODES = ['SNAP', 'GRID', 'ORTHO', 'POLAR', 'OSNAP', 'OTRACK', 'LWT', 'MODEL'];

const StatusBar = () => (
  <footer className="flex h-[21px] shrink-0 items-center gap-1 border-t border-[#aca899] px-1 text-[10px]">
    <output className="h-[17px] min-w-0 flex-1 truncate border border-t-[#c5c2b2] border-r-white border-b-white border-l-[#c5c2b2] pl-0.5 leading-4">
      224.7677, -17.6845, 0.0000
    </output>
    <div className="flex gap-[3px]">
      {MODES.map(mode => (
        <button
          key={mode}
          type="button"
          className={`h-[17px] border px-px leading-[15px] ${
            mode === 'MODEL'
              ? 'border-t-black border-r-white border-b-white border-l-black bg-[#f4f2ea]'
              : 'border-t-white border-r-[#aca899] border-b-[#aca899] border-l-white'
          }`}>
          {mode}
        </button>
      ))}
    </div>
    <svg viewBox="0 0 16 16" className="size-4 shrink-0">
      <path d="M2 5L7 1L12 6L6 9Z" fill="#b8cde4" stroke="#4c6789" />
      <path d="M5 8L1 13H7M9 3L14 0.500" stroke="#4c6789" strokeWidth="1.300" fill="none" />
      <path d="M9.500 5L15.500 15H4Z" fill="#ffe034" stroke="#b88d10" />
      <path d="M9.700 8V11.500M9.700 12.500V14" stroke="#111" strokeWidth="1.400" />
    </svg>
    <button type="button" aria-label="Status bar menu" className="mr-3 ml-1">
      <svg viewBox="0 0 7 4" className="w-[7px]">
        <path d="M0 0H7L3.500 4Z" fill="#000" />
      </svg>
    </button>
  </footer>
);

const App = () => (
  <div className="bg-[#8eabdf] font-['Liberation_Sans',sans-serif] text-[11px] text-black">
    <div className="flex min-h-screen flex-col overflow-hidden rounded-t-md bg-[#0448dc]">
      <TitleBar />
      <div className="mx-1 mb-1 flex flex-1 flex-col overflow-hidden bg-[#ece9d8]">
        <MenuBar />
        <div className="flex h-[25px] shrink-0">
          <Bar className="w-[359px]">
            <span className="flex w-[22px] justify-center">
              <Icon name="layers" />
            </span>
            <Combo label="Layer" value="VPORTS" className="flex-1" indent="pl-0.5">
              <LayerStates />
            </Combo>
            <button type="button" aria-label="Make layer current" className="flex w-[21px] justify-center">
              <Icon name="layerCurrent" />
            </button>
            <button type="button" aria-label="Previous layer" className="mr-1 flex w-[21px] justify-center">
              <Icon name="layerPrev" />
            </button>
          </Bar>
          <Bar className="w-[222px]">
            <Tools items={VIEWPORTS} />
            <Combo label="Viewport scale" value="0.200000" className="mr-1 w-[93px]" indent="pl-0.5" />
          </Bar>
        </div>
        <div className="flex h-[26px] shrink-0">
          <Bar className="w-[549px]">
            <div className="flex flex-1 gap-1.5 pr-0.5">
              <Combo label="Color" value="Green" className="w-[140px]">
                <span className="ml-1 size-2.5 border border-black bg-[#00ff00]" />
              </Combo>
              <Combo label="Linetype" value="ByLayer" className="flex-1">
                <span className="ml-1 h-px w-14 bg-black" />
              </Combo>
              <Combo label="Lineweight" value="ByLayer" className="w-[117px]">
                <span className="ml-1 h-[5px] w-8 bg-black" />
              </Combo>
              <Combo label="Plot style" value="ByColor" className="w-[113px]" indent="pl-2" disabled />
            </div>
          </Bar>
        </div>
        <div className="flex h-[27px] shrink-0">
          <Bar className="w-[501px] pr-[3px]">
            <Tools items={STANDARD} />
          </Bar>
        </div>
        <div className="flex h-[26px] shrink-0">
          <Bar className="w-[289px] shrink-0 pr-[3px]">
            <Tools items={VIEWS} />
          </Bar>
          <Bar className="w-[308px] shrink-0">
            <Tools items={SOLIDS} />
          </Bar>
        </div>
        <div className="flex flex-1">
          <Palette items={MODIFY} className="h-[338px]" />
          <Palette items={DRAW} text className="h-[359px]" />
          <ModelArea />
        </div>
        <CommandWindow />
        <StatusBar />
      </div>
    </div>
  </div>
);

export default App;
